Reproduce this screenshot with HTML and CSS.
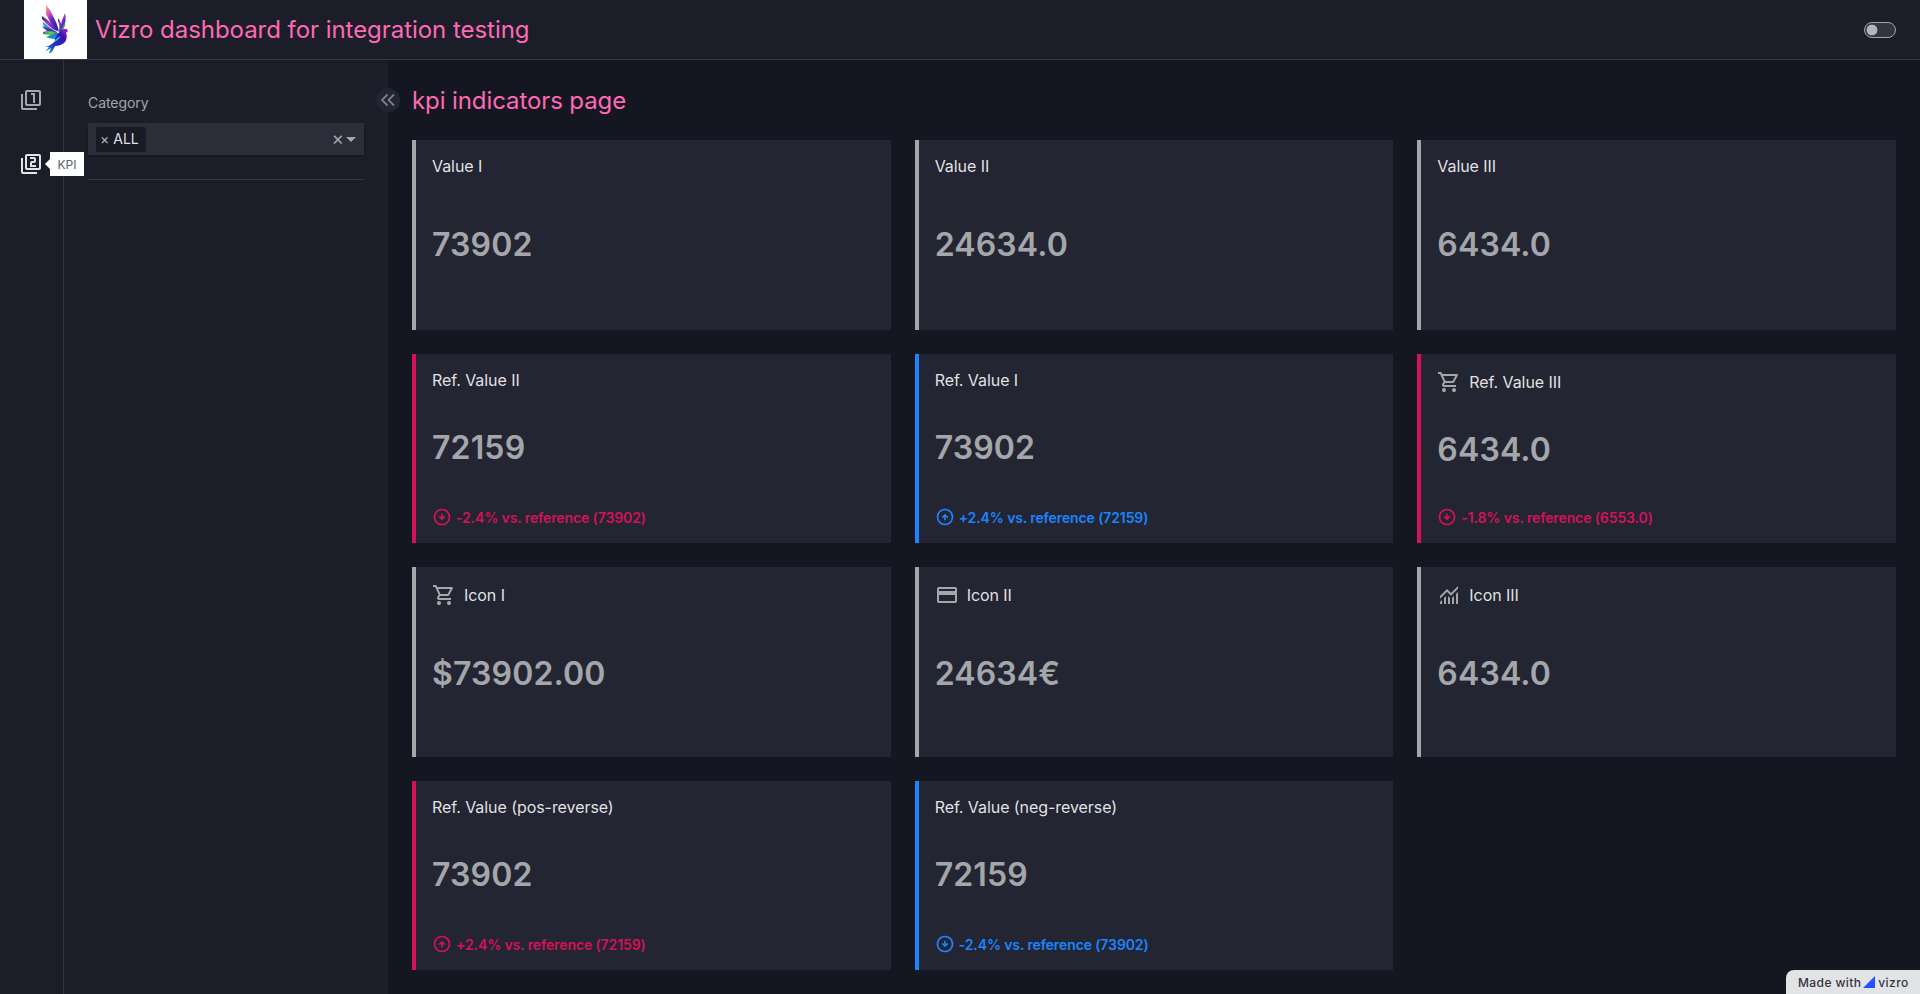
FILE: index.html
```html
<!DOCTYPE html>
<html lang="en">
<head>
<meta charset="utf-8">
<title>Vizro dashboard for integration testing</title>
<link rel="stylesheet" href="styles.css">
</head>
<body>
<svg class="sprite" aria-hidden="true">
  <symbol id="cart" viewBox="0 -960 960 960"><path d="M280-80q-33 0-56.500-23.500T200-160q0-33 23.500-56.500T280-240q33 0 56.500 23.500T360-160q0 33-23.500 56.500T280-80Zm400 0q-33 0-56.500-23.500T600-160q0-33 23.500-56.500T680-240q33 0 56.500 23.500T760-160q0 33-23.500 56.500T680-80ZM246-720l96 200h280l110-200H246Zm-38-80h590q23 0 35 20.500t1 41.500L692-482q-11 20-29.500 31T622-440H324l-44 80h480v80H280q-45 0-68-39.500t-2-78.500l54-98-144-304H40v-80h130l38 80Z"/></symbol>
  <symbol id="payment" viewBox="0 -960 960 960"><path d="M880-720v480q0 33-23.500 56.500T800-160H160q-33 0-56.500-23.500T80-240v-480q0-33 23.500-56.500T160-800h640q33 0 56.500 23.500T880-720Zm-720 80h640v-80H160v80Zm0 160v240h640v-240H160Z"/></symbol>
  <symbol id="monitoring" viewBox="0 -960 960 960"><path d="M120-120v-80l80-80v160h-80Zm160 0v-240l80-80v320h-80Zm160 0v-320l80 81v239h-80Zm160 0v-239l80-80v319h-80Zm160 0v-400l80-80v480h-80ZM120-327v-113l280-280 160 160 280-280v113L560-447 400-607 120-327Z"/></symbol>
  <symbol id="down" viewBox="0 -960 960 960"><path d="m480-320 160-160-56-56-64 64v-168h-80v168l-64-64-56 56 160 160Zm0 240q-83 0-156-31.500T197-197q-54-54-85.500-127T80-480q0-83 31.500-156T197-763q54-54 127-85.500T480-880q83 0 156 31.500T763-763q54 54 85.500 127T880-480q0 83-31.500 156T763-197q-54 54-127 85.500T480-80Zm0-80q134 0 227-93t93-227q0-134-93-227t-227-93q-134 0-227 93t-93 227q0 134 93 227t227 93Z"/></symbol>
  <symbol id="up" viewBox="0 0 24 24"><path d="M12 8l-4 4 1.400 1.400 1.600-1.600V16h2v-4.200l1.600 1.600L16 12z"/><circle cx="12" cy="12" r="9" fill="none" stroke="currentColor" stroke-width="2"/></symbol>
  <symbol id="pages" viewBox="0 0 24 24"><path fill-rule="evenodd" d="M8 2h12a2 2 0 0 1 2 2v12a2 2 0 0 1-2 2H8a2 2 0 0 1-2-2V4a2 2 0 0 1 2-2zm0 2v12h12V4zM4 22a2 2 0 0 1-2-2V6h2v14h14v2z"/></symbol>
</svg>

<header class="header">
  <div class="brand">
    <svg class="logo" viewBox="0 0 63 59">
      <defs>
        <linearGradient id="wing" x1="0" y1="0" x2="0.600" y2="1"><stop offset="0" stop-color="#ffb05c"/><stop offset=".3" stop-color="#e45bb9"/><stop offset=".6" stop-color="#642bc8"/><stop offset="1" stop-color="#1926b0"/></linearGradient>
        <linearGradient id="feather" x1="0" y1="0" x2="1" y2="1"><stop offset="0" stop-color="#153a68"/><stop offset=".4" stop-color="#b52fc4"/><stop offset="1" stop-color="#2811b5"/></linearGradient>
        <linearGradient id="green" x1="0" y1="0" x2="1" y2=".4"><stop offset="0" stop-color="#126c83"/><stop offset=".5" stop-color="#71cf4f"/><stop offset="1" stop-color="#1656b5"/></linearGradient>
        <linearGradient id="torso" x1="1" y1="0" x2="0" y2="1"><stop offset="0" stop-color="#b123d0"/><stop offset=".3" stop-color="#3214ae"/><stop offset=".65" stop-color="#2430cc"/><stop offset="1" stop-color="#19bddb"/></linearGradient>
      </defs>
      <path class="logo-bg" d="M0 0h63v59H0z"/>
      <path fill="url(#wing)" d="M22 5Q26 9 29 16Q33 23 35 31L31 29Q25 21 22 14Z"/>
      <path fill="url(#feather)" d="M18 16Q23 19 27 23L35 32L29 29Q22 24 18 19Z"/>
      <path fill="#2aa4b6" d="M19 22Q25 27 33 32L29 32Q20 28 19 24Z"/>
      <path fill="#582abf" d="M18 26Q26 28 34 33L31 35Q21 31 18 26Z"/>
      <path fill="url(#green)" d="M19 32Q26 29 36 34L34 37Q25 35 19 34Z"/>
      <path fill="#168ec0" d="M22 37Q27 34 36 35L32 39Q26 39 22 37Z"/>
      <path fill="url(#wing)" d="M41 13Q43 21 39 28L35 33Q37 25 38 20Z"/>
      <path fill="url(#feather)" d="M34 18Q38 23 38 30L35 32Q36 25 34 21Z"/>
      <path fill="#31a85f" d="M41 22Q42 26 38 31L36 32Z"/>
      <path fill="url(#torso)" d="M34 34Q36 30 40 29Q43 28 44 31L42 33Q44 37 41 42Q37 46 31 46L29 50Q27 54 25 53L27 48L21 52L25 47L21 47Q28 45 31 41Q30 39 34 34Z"/>
      <path fill="#31b3dc" d="M33 38L37 36Q34 41 29 43Z"/>
    </svg>
    <h1 class="title">Vizro dashboard for integration testing</h1>
  </div>
  <div class="switch"></div>
</header>

<div class="layout">
  <nav class="rail">
    <div class="rail-item"><svg class="icon" viewBox="0 0 24 24"><use href="#pages"/><path d="M14 15h2V5h-4v2h2z"/></svg></div>
    <div class="rail-item active"><svg class="icon" viewBox="0 0 24 24"><use href="#pages"/><path d="M17 15h-6v-4a2 2 0 0 1 2-2h2V7h-4V5h4a2 2 0 0 1 2 2v2a2 2 0 0 1-2 2h-2v2h4z"/></svg><div class="tip">KPI</div></div>
  </nav>
  <aside class="panel">
    <div class="label">Category</div>
    <div class="select">
      <div class="chip"><span class="chip-x">×</span><span>ALL</span></div>
      <div class="select-end"><span class="clear">×</span><span class="caret"></span></div>
    </div>
    <div class="collapse"><svg class="icon-collapse" viewBox="0 0 24 24"><path d="M11.500 6.500L6 12l5.500 5.500M18 6.500L12.500 12l5.500 5.500"/></svg></div>
  </aside>
  <main class="main">
    <h2 class="title">kpi indicators page</h2>
    <div class="grid">
      <section class="card"><div class="card-head">Value I</div><div class="value">73902</div></section>
      <section class="card"><div class="card-head">Value II</div><div class="value">24634.0</div></section>
      <section class="card"><div class="card-head">Value III</div><div class="value">6434.0</div></section>

      <section class="card neg"><div class="card-head">Ref. Value II</div><div class="value">72159</div><div class="foot"><svg class="icon-small"><use href="#down"/></svg>-2.4% vs. reference (73902)</div></section>
      <section class="card pos"><div class="card-head">Ref. Value I</div><div class="value">73902</div><div class="foot"><svg class="icon-small"><use href="#up"/></svg>+2.4% vs. reference (72159)</div></section>
      <section class="card neg"><div class="card-head"><svg class="icon"><use href="#cart"/></svg>Ref. Value III</div><div class="value">6434.0</div><div class="foot"><svg class="icon-small"><use href="#down"/></svg>-1.8% vs. reference (6553.0)</div></section>

      <section class="card"><div class="card-head"><svg class="icon"><use href="#cart"/></svg>Icon I</div><div class="value">$73902.00</div></section>
      <section class="card"><div class="card-head"><svg class="icon"><use href="#payment"/></svg>Icon II</div><div class="value">24634€</div></section>
      <section class="card"><div class="card-head"><svg class="icon"><use href="#monitoring"/></svg>Icon III</div><div class="value">6434.0</div></section>

      <section class="card neg"><div class="card-head">Ref. Value (pos-reverse)</div><div class="value">73902</div><div class="foot"><svg class="icon-small"><use href="#up"/></svg>+2.4% vs. reference (72159)</div></section>
      <section class="card pos"><div class="card-head">Ref. Value (neg-reverse)</div><div class="value">72159</div><div class="foot"><svg class="icon-small"><use href="#down"/></svg>-2.4% vs. reference (73902)</div></section>
    </div>
  </main>
</div>
<div class="made">Made with<svg class="vizro-mark" viewBox="0 0 12 12"><path d="M0 12L12 0v12z"/></svg>vizro</div>
</body>
</html>
```
FILE: styles.css
```css
* { box-sizing: border-box; }
body {
  margin: 0;
  height: 994px;
  display: flex;
  flex-direction: column;
  overflow: hidden;
  background: #141721;
  color: rgba(255, 255, 255, 0.88);
  font-family: Inter, "Liberation Sans", sans-serif;
  font-size: 16px;
}
.sprite { position: absolute; width: 0; height: 0; }
.icon { width: 24px; height: 24px; fill: currentColor; flex: none; }
.header {
  height: 60px;
  flex: none;
  display: flex;
  align-items: center;
  justify-content: space-between;
  padding: 0 24px;
  background: #1b1d29;
  border-bottom: 1px solid #323440;
}
.brand { display: flex; align-items: center; gap: 8px; }
.logo { width: 63px; height: 59px; display: block; }
.logo-bg { fill: #fff; }
.title {
  margin: 0;
  color: #ff69b4;
  font-size: 24px;
  line-height: 32px;
  font-weight: 400;
  letter-spacing: -0.002em;
}
.main .title { padding-top: 1px; height: 32px; letter-spacing: -0.004em; }
.switch {
  width: 32px;
  height: 16px;
  border: 1px solid #a5a6ab;
  border-radius: 8px;
  background: radial-gradient(circle at 7px 7px, #b4b5ba 5px, transparent 5.800px) #33353f;
}
.layout { flex: 1; display: flex; min-height: 0; }
.rail {
  width: 64px;
  flex: none;
  padding-top: 28px;
  padding-right: 1px;
  display: flex;
  flex-direction: column;
  align-items: center;
  gap: 40px;
  background: #1b1d29;
  border-right: 1px solid #323440;
}
.rail-item { position: relative; height: 24px; color: #a5a6ab; }
.rail-item.active { color: #e3e3e5; }
.tip {
  position: absolute;
  left: 31px;
  top: 0;
  width: 34px;
  height: 24px;
  z-index: 2;
  background: #fff;
  color: #5c5e66;
  font-size: 12px;
  line-height: 25px;
  text-align: center;
}
.tip::before {
  content: "";
  position: absolute;
  left: -5px;
  top: 7px;
  border: 5px solid transparent;
  border-left: 0;
  border-right-color: #fff;
}
.panel {
  position: relative;
  width: 324px;
  flex: none;
  padding: 33px 24px 0;
  background: #1b1d29;
}
.label { font-size: 14px; line-height: 20px; letter-spacing: -0.004em; color: rgba(255, 255, 255, 0.6); }
.select {
  height: 32px;
  margin-top: 10px;
  display: flex;
  align-items: center;
  justify-content: space-between;
  padding: 0 8px;
  background: #2b2d38;
  box-shadow: 0 1px 2px rgba(0, 0, 0, 0.3);
}
.panel::after {
  content: "";
  display: block;
  margin-top: 24px;
  border-top: 1px solid #323440;
}
.chip {
  display: flex;
  align-items: center;
  gap: 4px;
  height: 25px;
  width: 50px;
  padding-left: 4px;
  background: #181a25;
  border-radius: 2px;
  font-size: 14px;
  letter-spacing: -0.002em;
  line-height: 23px;
}
.chip span { margin-top: -1px; }
.chip-x { color: rgba(255, 255, 255, 0.7); }
.select-end { display: flex; align-items: center; gap: 2px; color: #a5a6ab; }
.clear { font-size: 19px; line-height: 20px; }
.caret { border: 5px solid transparent; border-top-color: #a5a6ab; border-bottom: 0; }
.collapse {
  position: absolute;
  right: -12px;
  top: 28px;
  width: 24px;
  height: 24px;
  display: flex;
  align-items: center;
  justify-content: center;
  border-radius: 50%;
  background: #232632;
}
.icon-collapse { width: 24px; height: 24px; fill: none; stroke: #7d7f87; stroke-width: 1.800; }
.main {
  flex: 1;
  display: flex;
  flex-direction: column;
  padding: 24px;
  gap: 24px;
}
.grid {
  flex: 1;
  display: grid;
  grid-template-columns: repeat(3, minmax(0, 1fr));
  grid-template-rows: repeat(4, minmax(0, 1fr));
  gap: 24px;
}
.card {
  display: flex;
  flex-direction: column;
  padding: 16px;
  background: #232632;
  border-left: 4px solid #a5a6ab;
}
.card-head { display: flex; align-items: center; gap: 8px; line-height: 20px; letter-spacing: -0.004em; }
.card-head .icon { color: #a5a6ab; }
.value {
  flex: 1;
  display: flex;
  align-items: center;
  font-size: 32px;
  font-weight: 600;
  line-height: 40px;
  letter-spacing: 0.15px;
  color: #a5a6ab;
}
.foot {
  display: flex;
  align-items: center;
  gap: 4px;
  height: 20px;
  font-size: 14px;
  font-weight: 600;
  letter-spacing: -0.008em;
}
.icon-small { width: 20px; height: 20px; fill: currentColor; }
.neg { border-left-color: #d41159; }
.neg .foot { color: #d41159; }
.pos { border-left-color: #1a85ff; }
.pos .foot { color: #1a85ff; }
.made {
  position: fixed;
  right: 0;
  bottom: 0;
  width: 134px;
  height: 24px;
  display: flex;
  align-items: center;
  padding-left: 12px;
  background: #e2e3e5;
  color: #32343f;
  border-top-left-radius: 8px;
  font-size: 12px;
  font-weight: 500;
  letter-spacing: 0.4px;
}
.vizro-mark { width: 12px; height: 12px; margin: 0 3px 0 2px; fill: #2251ff; }
```
